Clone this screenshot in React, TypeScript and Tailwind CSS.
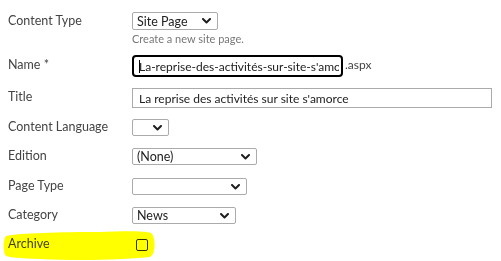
import React from "react";

const Chevron = () => (
  <svg width="9" height="6" viewBox="0 0 9 6" className="shrink-0">
    <path d="M1 1 L4.5 4.5 L8 1" fill="none" stroke="#1f1f1f" strokeWidth="2" strokeLinecap="round" strokeLinejoin="round" />
  </svg>
);

const Select = ({ w, h = "h-[17px]", text }: { w: string; h?: string; text?: string }) => (
  <div className={`${w} ${h} border border-[#ababab] rounded-[2px] flex items-center justify-between pl-[4px] pr-[6px] bg-white`}>
    <span className="text-[#222] text-[12.5px] leading-[15px] whitespace-nowrap">{text ?? ""}</span>
    <Chevron />
  </div>
);

const Label = ({ children }: { children: React.ReactNode }) => (
  <div className="w-[124px] shrink-0 text-[12.5px] leading-[16px] text-[#444] -mt-[2px]">{children}</div>
);

export default function App() {
  return (
    <div className="relative w-[501px] h-[261px] bg-white overflow-hidden font-['Lato',sans-serif]">
      <div className="pl-[8px] pt-[12px] flex flex-col">
        <div className="flex items-start">
          <div className="w-[124px] shrink-0 text-[12.5px] leading-[16px] text-[#444] mt-[1px]">Content Type</div>
          <div className="flex flex-col">
            <Select w="w-[86px]" h="h-[18px]" text="Site Page" />
            <div className="mt-[1px] h-[16px] text-[11px] leading-[16px] text-[#777]">Create a new site page.</div>
          </div>
        </div>

        <div className="flex items-center mt-[8px]">
          <Label>Name *</Label>
          <div className="relative w-[211px] h-[22px] border-2 border-black rounded-[4px] flex items-center pl-[4px] pr-[2px]">
            <span className="absolute left-[5px] top-[3px] w-px h-[13px] bg-black" />
            <span className="block w-full overflow-hidden text-[12px] leading-[15px] text-[#222] whitespace-nowrap pl-[1px]">La-reprise-des-activités-sur-site-s'amorce</span>
          </div>
          <span className="ml-[2px] -mt-[4px] text-[12px] leading-[15px] text-[#444]">.aspx</span>
        </div>

        <div className="flex items-center mt-[11px]">
          <Label>Title</Label>
          <div className="w-[360px] h-[20px] border border-[#ababab] flex items-center pl-[6px]">
            <span className="text-[12px] leading-[15px] text-[#222] whitespace-nowrap">La reprise des activités sur site s'amorce</span>
          </div>
        </div>

        <div className="flex items-center mt-[11px]">
          <Label>Content Language</Label>
          <Select w="w-[37px]" />
        </div>

        <div className="flex items-center mt-[12px]">
          <Label>Edition</Label>
          <Select w="w-[125px]" text="(None)" />
        </div>

        <div className="flex items-center mt-[13px]">
          <Label>Page Type</Label>
          <Select w="w-[115px]" />
        </div>

        <div className="flex items-center mt-[12px]">
          <Label>Category</Label>
          <Select w="w-[104px]" text="News" />
        </div>

        <div className="flex items-center mt-[14px]">
          <Label>Archive</Label>
          <div className="ml-[4px] w-[12px] h-[12px] border border-[#333] rounded-[2px] bg-white" />
        </div>
      </div>

      <svg className="absolute left-0 top-[228px] mix-blend-multiply pointer-events-none" width="160" height="33" viewBox="0 0 160 33">
        <path
          d="M6 8 C 20 5, 60 4, 100 4 C 125 3, 145 3, 151 5 C 156 9, 156 26, 150 29 C 120 32, 80 33, 40 31 C 20 30, 8 30, 5 27 C 3 20, 3 12, 6 8 Z"
          fill="#ffff00"
        />
      </svg>
    </div>
  );
}
